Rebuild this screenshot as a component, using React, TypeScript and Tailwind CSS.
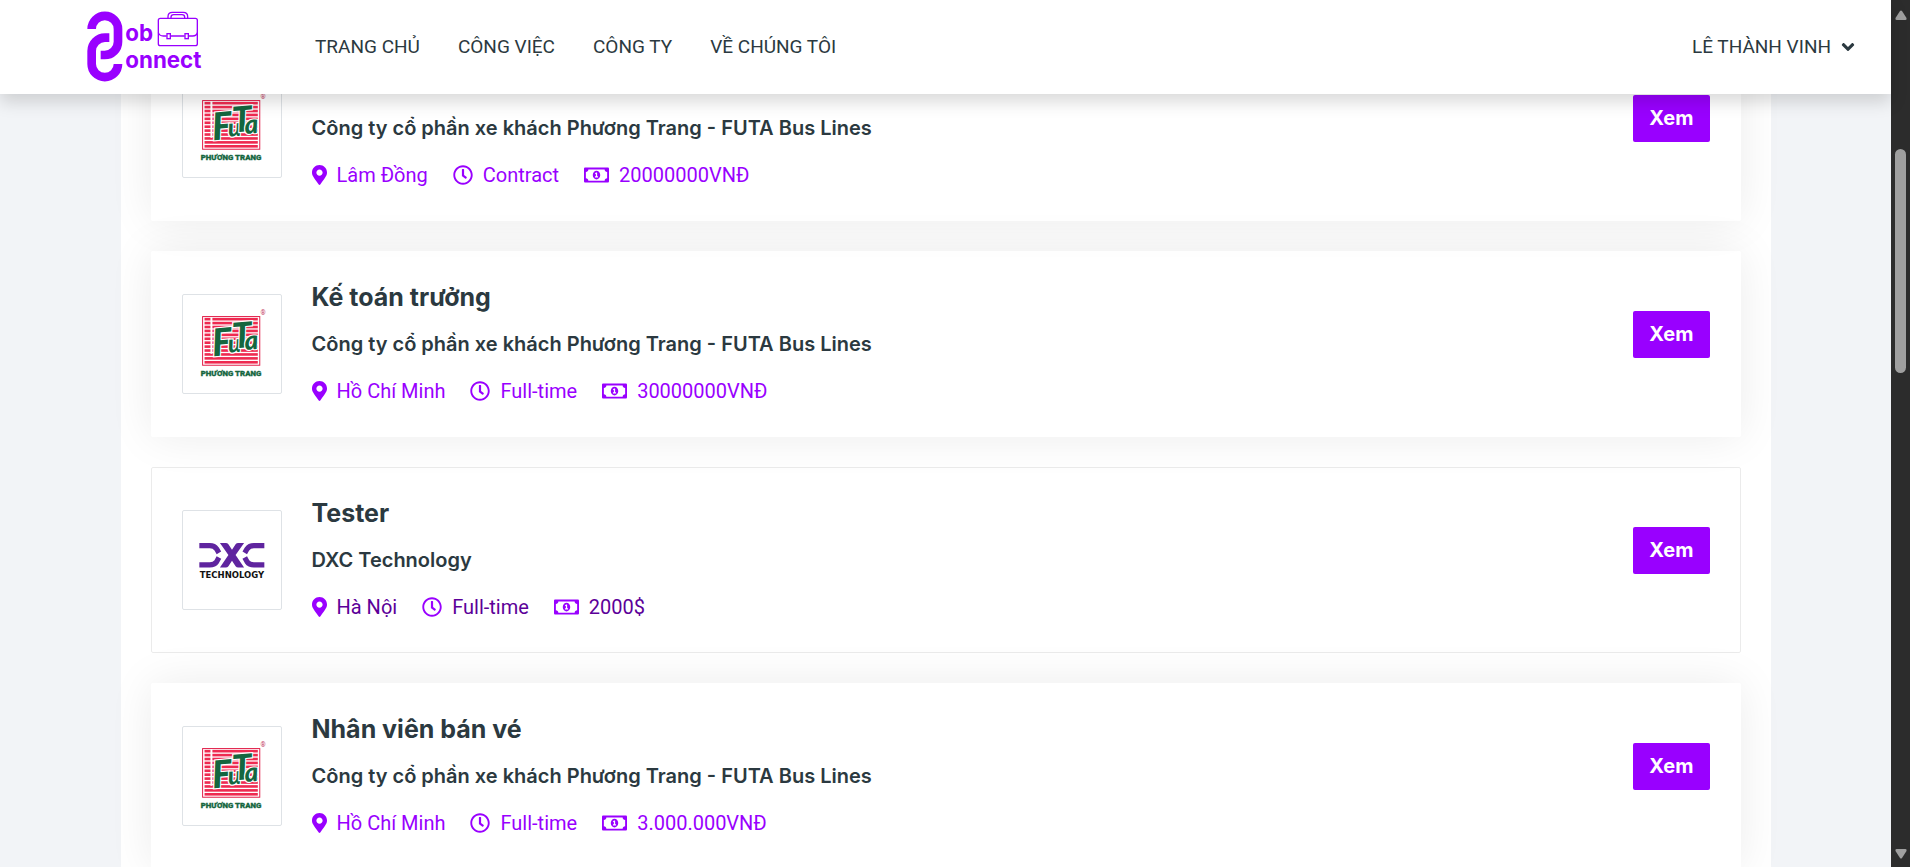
import React from "react";
import { FaAngleDown, FaMapMarkerAlt, FaRegClock, FaRegMoneyBillAlt } from "react-icons/fa";

type Job = {
  id: number;
  title: string;
  company: string;
  place: string;
  kind: string;
  salary: string;
  logo: "futa" | "dxc";
  active?: boolean;
};

const futa = "Công ty cổ phần xe khách Phương Trang - FUTA Bus Lines";

const jobs: Job[] = [
  { id: 1, title: "Nhân viên bán vé", company: futa, place: "Lâm Đồng", kind: "Contract", salary: "20000000VNĐ", logo: "futa" },
  { id: 2, title: "Kế toán trưởng", company: futa, place: "Hồ Chí Minh", kind: "Full-time", salary: "30000000VNĐ", logo: "futa" },
  { id: 3, title: "Tester", company: "DXC Technology", place: "Hà Nội", kind: "Full-time", salary: "2000$", logo: "dxc", active: true },
  { id: 4, title: "Nhân viên bán vé", company: futa, place: "Hồ Chí Minh", kind: "Full-time", salary: "3.000.000VNĐ", logo: "futa" },
];

const links = ["Trang chủ", "Công việc", "Công ty", "Về chúng tôi"];

function BrandLogo() {
  return (
    <svg viewBox="0 0 360 222" className="h-[74px] w-[120px] normal-case" role="img" aria-label="Job Connect">
      <g fill="none" stroke="#9900ff" strokeWidth="26">
        <path d="M17 57 A39.5 39.5 0 0 1 96 57 V95 A40 40 0 0 1 56 135 H44" />
        <path d="M70 83 H57 A40 40 0 0 0 17 123 V162 A39.5 39.5 0 0 0 96 162" />
      </g>
      <g fill="none" stroke="#9900ff" strokeWidth="4">
        <rect x="217" y="25" width="117" height="82" rx="6" />
        <path d="M246 25 V20 Q246 7 259 7 H292 Q305 7 305 20 V25 M255 25 V22 Q255 14 263 14 H288 Q296 14 296 22 V25" />
        <path d="M217 68 Q220 78 232 78 H242 M254 78 H296 M308 78 H320 Q332 78 334 68" />
        <rect x="243" y="71" width="10" height="15" />
        <rect x="297" y="71" width="10" height="15" />
      </g>
      <g fill="#9900ff" fontFamily="Inter, sans-serif" fontWeight="700" fontSize="67">
        <text x="118" y="92">ob</text>
        <text x="118" y="174">onnect</text>
      </g>
    </svg>
  );
}

const stripes = [70, 82, 94, 106, 118, 130, 142, 154, 166, 178, 190, 202];

const futaLetters = [
  { char: "F", x: 88, y: 182, size: 116 },
  { char: "u", x: 136, y: 176, size: 76 },
  { char: "T", x: 152, y: 164, size: 108 },
  { char: "a", x: 188, y: 172, size: 80 },
];

function FutaLogo() {
  return (
    <svg viewBox="0 0 300 300" className="size-full" role="img" aria-label="Phương Trang">
      <rect x="60" y="66" width="175" height="149" fill="#fff" stroke="#e11d48" strokeWidth="3" />
      {stripes.map((y) => (
        <rect key={y} x="66" y={y} width="163" height="8" fill="#ee2a50" />
      ))}
      <rect x="84" y="68" width="6" height="112" fill="#fff" />
      <g
        transform="rotate(-5 150 140)"
        fontFamily="Lato, sans-serif"
        fontStyle="italic"
        fontWeight="900"
        fill="#14663f"
        stroke="#fff"
        strokeWidth="7"
        paintOrder="stroke"
      >
        {futaLetters.map(({ char, x, y, size }) => (
          <text key={char} x={x} y={y} fontSize={size}>
            {char}
          </text>
        ))}
      </g>
      <text x="237" y="62" fontFamily="Roboto, sans-serif" fontSize="20" fill="#c2355a">®</text>
      <text x="147" y="248" textAnchor="middle" fontFamily="Roboto, sans-serif" fontWeight="900" fontSize="24" fill="#14663f" stroke="#14663f" strokeWidth="1">
        PHƯƠNG TRANG
      </text>
    </svg>
  );
}

function DxcLogo() {
  return (
    <svg viewBox="0 0 300 300" className="size-full" role="img" aria-label="DXC Technology">
      <g fill="none" stroke="#5f249f" strokeWidth="16">
        <path d="M50 106 H82 Q96 106 103 116 L110 128" />
        <path d="M50 165 H82 Q96 165 103 155 L110 142" />
        <path d="M249 106 H217 Q203 106 196 116 L189 128" />
        <path d="M249 165 H217 Q203 165 196 155 L189 142" />
      </g>
      <path
        fill="#5f249f"
        d="M113 98 H131 Q136 98 139 102 L150 119 L161 102 Q164 98 169 98 H187 L161 135 L187 173 H169 Q164 173 161 169 L150 152 L139 169 Q136 173 131 173 H113 L139 135 Z"
      />
      <text x="150" y="206" textAnchor="middle" fontFamily="DejaVu Sans, sans-serif" fontWeight="700" fontSize="26" fill="#111">
        TECHNOLOGY
      </text>
    </svg>
  );
}

function JobCard({ job }: { job: Job }) {
  const frame = job.active ? "border-black/8" : "border-transparent shadow-[0_0_45px_rgba(0,0,0,0.08)]";
  const meta = job.active ? "text-[#5c0099]" : "text-[#9900ff]";
  return (
    <article className={`flex items-center justify-between rounded-xs border p-[30px] ${frame}`}>
      <div className="flex items-center gap-[30px]">
        <div className="size-[100px] shrink-0 rounded-xs border border-[#dee2e6] bg-white">
          {job.logo === "futa" ? <FutaLogo /> : <DxcLogo />}
        </div>
        <div className="text-[#2b3940]">
          <h2 className="font-[Inter,sans-serif] text-[25px] leading-[30px] font-bold">{job.title}</h2>
          <h3 className="mt-5 font-[Inter,sans-serif] text-xl leading-6 font-semibold">{job.company}</h3>
          <ul className={`mt-5 flex gap-[25px] text-xl leading-[30px] ${meta}`}>
            <li className="flex items-center gap-2.5">
              <FaMapMarkerAlt className="h-5 w-[15px] text-[#9900ff]" />
              {job.place}
            </li>
            <li className="flex items-center gap-2.5">
              <FaRegClock className="size-5 text-[#9900ff]" />
              {job.kind}
            </li>
            <li className="flex items-center gap-2.5">
              <FaRegMoneyBillAlt className="h-5 w-[25px] text-[#9900ff]" />
              {job.salary}
            </li>
          </ul>
        </div>
      </div>
      <div className="pb-5">
        <button type="button" className="rounded-xs bg-[#9900ff] px-4 py-2 font-[Inter,sans-serif] text-xl leading-[31px] font-bold text-white">
          Xem
        </button>
      </div>
    </article>
  );
}

export default function App() {
  return (
    <div className="flex h-screen overflow-hidden bg-[#f2f4f7] font-[Roboto,sans-serif]">
      <div className="min-w-0 flex-1">
        <header className="relative z-10 flex h-[94px] items-center bg-white pr-9 pl-[86px] text-[19px] text-[#2b3940] uppercase shadow-[0_8px_16px_rgba(0,0,0,0.15)]">
          <a href="#home">
            <BrandLogo />
          </a>
          <nav className="ml-[109px] flex gap-[38px]">
            {links.map((label) => (
              <a key={label} href="#menu">
                {label}
              </a>
            ))}
          </nav>
          <button type="button" className="ml-auto flex items-center gap-2.5 uppercase">
            Lê Thành Vinh
            <FaAngleDown className="h-5 w-[14px]" />
          </button>
        </header>
        <main className="mx-auto -mt-[59px] flex max-w-[1650px] flex-col gap-[30px] bg-white px-[30px]">
          {jobs.map((job) => (
            <JobCard key={job.id} job={job} />
          ))}
        </main>
      </div>
      <div aria-hidden="true" className="flex w-[19px] shrink-0 flex-col items-center justify-between bg-[#2c2c2c] pt-2.5 pb-2">
        <svg viewBox="0 0 12 10" className="h-2.5 w-3" fill="#9f9f9f">
          <path d="M5 1 Q6 0 7 1 L11.500 8 Q12 10 10.500 10 H1.500 Q0 10 .5 8 Z" />
        </svg>
        <div className="mt-[129px] mb-auto h-[224px] w-[11px] rounded-full bg-[#9f9f9f]" />
        <svg viewBox="0 0 12 10" className="h-2.5 w-3" fill="#9f9f9f">
          <path d="M5 9 Q6 10 7 9 L11.500 2 Q12 0 10.500 0 H1.500 Q0 0 .5 2 Z" />
        </svg>
      </div>
    </div>
  );
}
